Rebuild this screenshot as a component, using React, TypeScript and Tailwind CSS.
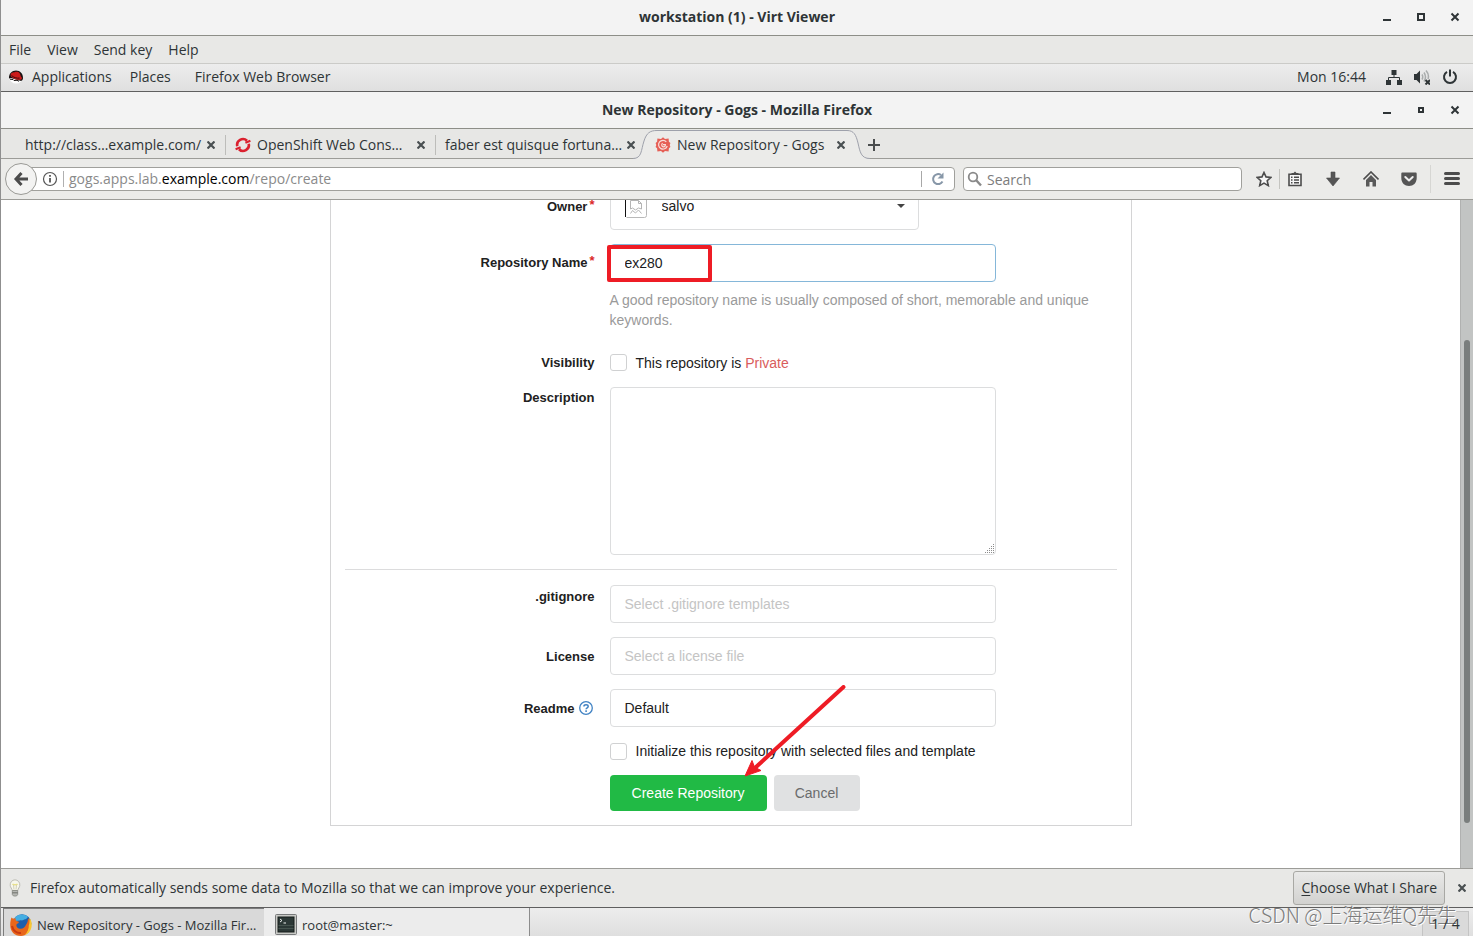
import React from 'react';
import clsx from 'clsx';

interface Tab {
  title: string;
  icon?: React.ReactNode;
  active?: boolean;
}

interface FieldProps {
  label?: React.ReactNode;
  htmlFor?: string;
  required?: boolean;
  labelClass?: string;
  className?: string;
  children: React.ReactNode;
}

const RedHatIcon = () => (
  <svg className="h-4 w-4" viewBox="0 0 16 16">
    <circle cx="8" cy="8" r="6.6" fill="#fdfdfd" />
    <path d="M1 9.5C.6 4.500 4 1.500 8 1.500s7.400 3 7 8c-.3 2-1.600 2.700-2.800 2.300L3 9z" fill="#1a1414" />
    <path d="M3 4.500C4.500 3 5.500 3.500 6.500 3.200 8 2.500 10.500 2.500 11.500 4c.8 1.200 1 2.500 1.400 3.500 1 .8 1.500 2 .6 2.700-1.500 1.200-5.500.6-8-1C3 8 1.800 6.600 3 4.500z" fill="#cc1b1b" />
    <path d="M3.600 6.500c2 2 5 3 8 2.600" fill="none" stroke="#3b0d0d" strokeWidth="1" />
    <path d="M2 10.200l3 .3 1 1 3-.2 2 1" fill="none" stroke="#1a1414" strokeWidth="1" />
  </svg>
);

const OpenShiftIcon = () => (
  <svg className="h-4 w-4 shrink-0" viewBox="0 0 16 16" fill="none" stroke="#db212f" strokeWidth="2.6">
    <path d="M2.300 9.300A5.800 5.800 0 0 1 12 3.800" />
    <path d="M13.700 6.700A5.800 5.800 0 0 1 4 12.200" />
    <path d="M10.400 5.700l5-2M.6 12.300l5-2" strokeWidth="2.200" />
  </svg>
);

const GogsIcon = () => (
  <svg className="h-4 w-4 shrink-0" viewBox="0 0 16 16">
    <path d="M8 .2l2 1.900 3.600-.6.300 3.200 1.500 1.300L14.700 8l.7 2-1.500 1.300-.3 3.200-3.600-.6-2 1.900-2-1.900-3.600.6-.3-3.200L.6 10l.7-2-.7-2 1.500-1.300.3-3.200 3.600.6z" fill="#e65f56" />
    <path d="M11.300 4.800A4.400 4.400 0 1 0 12.200 9" fill="none" stroke="#f9dedb" strokeWidth="1.200" />
    <path d="M7.700 6.200C6.200 7 6.500 9.500 8.200 9.800c1.500.2 2.300-.9 2.200-2.100H8" fill="none" stroke="#f9dedb" strokeWidth="1.200" />
  </svg>
);

const FirefoxIcon = () => (
  <svg className="h-6 w-6 shrink-0" viewBox="0 0 24 24">
    <circle cx="13" cy="10.500" r="9.300" fill="#1d5fae" />
    <path d="M5 6C8 .8 15 .3 19 4c-1 1-2 2.500-4 2.500-1.500 1.500-3 .5-4 1L6 8z" fill="#45aee2" />
    <path d="M2.500 4.500C4 6 5 5.500 7 5.500c-1 1.500 0 2.500 2 3 1.500.3 1 1.500-.8 2.300-1.700.8-.7 4.700 2.800 5 3.500.2 5-2 6-4 1.500-2 2-4 2-6.500 3 3 3.500 6 2.500 9.500C20.500 19.500 17 23 12 23 5.500 23 1.200 18.500 1.200 12c0-3 .5-5.500 1.300-7.500z" fill="#e8661b" />
    <path d="M20.300 4.800c2 2 3 6 2.200 9.500-.8 3.700-3.500 6.700-7 8 3-3 4.500-6.500 4.300-10 .9-1.800.8-5 .5-7.500z" fill="#f9c731" />
    <path d="M3 13c1 5 5 7.500 9 7" fill="none" stroke="#c93a12" strokeWidth="2" />
  </svg>
);

const TerminalIcon = () => (
  <svg className="h-[22px] w-[22px] shrink-0" viewBox="0 0 22 22">
    <rect x=".5" y=".5" width="21" height="20" rx="1" fill="#c9cac6" stroke="#77797a" />
    <rect x="3" y="3" width="16" height="15" fill="#2c3836" stroke="#161c1b" />
    <path d="M3.500 11.500h15M3.500 14.500h15" stroke="#46544f" />
    <path d="M5 5l2 1.500L5 8M8.500 9h2.500" fill="none" stroke="#eef1ee" />
  </svg>
);

const BulbIcon = () => (
  <svg className="h-[18px] w-3" viewBox="0 0 12 18">
    <path d="M6 .8a5 5 0 0 0-4.800 5.500C1.300 8.500 3 9.500 3.200 11.500h5.600C9 9.500 10.700 8.500 10.800 6.300A5 5 0 0 0 6 .8z" fill="#f7f7ec" stroke="#bdbdb4" />
    <path d="M3.500 5c1 1 4 1 5 0" fill="none" stroke="#e8e08a" strokeWidth="1.600" />
    <path d="M4.500 6l.5 4.500M7.500 6L7 10.500" fill="none" stroke="#d3d1b8" />
    <path d="M3.300 11.500h5.400v4L7.500 17h-3l-1.200-1.500z" fill="#b5b7b3" stroke="#84867f" strokeWidth=".8" />
    <path d="M3.300 13.800h5.400" stroke="#6f716c" />
  </svg>
);

const BoldX = () => (
  <svg className="h-2 w-2" viewBox="0 0 8 8" stroke="#4a5052" strokeWidth="2.200">
    <path d="M.5.5l7 7M7.500.5l-7 7" />
  </svg>
);

const WindowButtons = ({ large }: { large?: boolean }) => (
  <div className="absolute right-3 flex items-center gap-[22px]">
    <button aria-label="Minimize" className="flex h-3 w-3 items-center justify-center">
      <svg className="h-3 w-3" viewBox="0 0 12 12">
        <path d="M2 9h8" stroke="#2e3436" strokeWidth="2" />
      </svg>
    </button>
    <button aria-label="Maximize" className="flex h-3 w-3 items-center justify-center">
      <svg className="h-3 w-3" viewBox="0 0 12 12" fill="none" stroke="#2e3436" strokeWidth="2">
        {large ? <rect x="3" y="3" width="6" height="6" /> : <rect x="4" y="4" width="4" height="4" />}
      </svg>
    </button>
    <button aria-label="Close" className="flex h-3 w-3 items-center justify-center">
      <svg className="h-3 w-3" viewBox="0 0 12 12" stroke="#2e3436" strokeWidth="2">
        <path d="M2.500 2.500l7 7M9.500 2.500l-7 7" />
      </svg>
    </button>
  </div>
);

const TitleBar = ({ title, large }: { title: string; large?: boolean }) => (
  <div
    className={clsx(
      'relative flex shrink-0 items-center justify-center border-b border-[#8d8e88] bg-[#f3f3f3]',
      large ? 'h-9 pb-px' : 'h-[37px]'
    )}
  >
    <h1 className="font-bold">{title}</h1>
    <WindowButtons large={large} />
  </div>
);

const tabs: Tab[] = [
  { title: 'http://class…example.com/' },
  { title: 'OpenShift Web Cons…', icon: <OpenShiftIcon /> },
  { title: 'faber est quisque fortuna…' },
  { title: 'New Repository - Gogs', icon: <GogsIcon />, active: true },
];

const TabStrip = () => (
  <div className="flex h-[30px] shrink-0 border-b border-[#9c9c98] bg-[#e7e7e5] pl-[14px]">
    {tabs.map((tab, i) => (
      <div key={tab.title} className="relative flex h-[29px] w-[210px] items-center">
        {tab.active && (
          <svg className="absolute -left-3 top-0 h-[30px] w-[237px]" viewBox="0 0 237 30">
            <path d="M0 30V29.500C9 29.500 8 21 11 12 13.500 4 17 1.500 24 1.500H214C221 1.500 223 6 225 14 227 23 228 29.500 237 29.500V30z" fill="#ebebe9" />
            <path d="M0 29.500C9 29.500 8 21 11 12 13.500 4 17 1.500 24 1.500H214C221 1.500 223 6 225 14 227 23 228 29.500 237 29.500" fill="none" stroke="#9ea1ab" />
          </svg>
        )}
        <div className="relative flex min-w-0 flex-1 items-center gap-[6px] pl-[10px] pt-[3px]">
          {tab.icon}
          <span className="whitespace-nowrap">{tab.title}</span>
        </div>
        <button aria-label="Close tab" className="relative mr-[10px] mt-[3px] flex h-2 w-2">
          <BoldX />
        </button>
        {i < 2 && <span className="absolute -right-px top-[6px] h-5 w-px bg-[#bdbdba]" />}
      </div>
    ))}
    <button aria-label="New tab" className="ml-[13px] mt-[10px] flex h-3 w-3">
      <svg className="h-3 w-3" viewBox="0 0 12 12" stroke="#4a4d4e" strokeWidth="2">
        <path d="M6 0v12M0 6h12" />
      </svg>
    </button>
  </div>
);

const toolbarIcons: { label: string; icon: React.ReactNode }[] = [
  {
    label: 'Bookmarks',
    icon: (
      <>
        <path d="M2 3.300h12v11.200H2z" fill="#f6f6f6" stroke="#4c4c4c" strokeWidth="1.600" />
        <path d="M4.500 4V2h2L8 .5 9.500 2h2v2z" fill="#4c4c4c" />
        <path d="M4 6.200h1.500M7 6.200h5M4 9h1.500M7 9h5M4 11.800h1.500M7 11.800h5" stroke="#4c4c4c" strokeWidth="1.500" />
      </>
    ),
  },
  {
    label: 'Downloads',
    icon: <path d="M6 1h4v6h4.500L8 15 1.500 7H6z" fill="#555" stroke="#4a4a4a" strokeWidth=".6" />,
  },
  {
    label: 'Home',
    icon: (
      <>
        <path d="M.5 8.500L8 1l7.500 7.500" fill="none" stroke="#4c4c4c" strokeWidth="1.600" />
        <path d="M3 9l5-5 5 5v6.500H9.500v-4.500h-3v4.500H3z" fill="#5a5a5a" />
      </>
    ),
  },
  {
    label: 'Pocket',
    icon: (
      <>
        <path d="M1.500 1.500h13c.8 0 1.200.5 1.200 1.200V7c0 5-3.500 8-7.700 8S.3 12 .3 7V2.700c0-.7.400-1.200 1.200-1.200z" fill="#555" />
        <path d="M4.300 6L8 9.500 11.700 6" fill="none" stroke="#eee" strokeWidth="2" strokeLinecap="round" strokeLinejoin="round" />
      </>
    ),
  },
];

const NavBar = () => (
  <div className="flex h-[41px] shrink-0 items-center border-b border-[#9c9c98] bg-[#ebebe9] pl-1 pr-[13px]">
    <button aria-label="Back" className="relative z-10 flex h-8 w-8 shrink-0 items-center justify-center rounded-full border border-[#9a9a96] bg-[#f3f3f2]">
      <svg className="h-4 w-4" viewBox="0 0 16 16" fill="none" stroke="#4c4c4c" strokeWidth="3">
        <path d="M8.500 2L3 8l5.500 6M3.500 8H15" />
      </svg>
    </button>
    <div className="-ml-2 flex h-6 flex-1 items-center rounded-r-sm border border-[#a0a09c] bg-white pl-3">
      <svg className="h-4 w-4 shrink-0" viewBox="0 0 16 16" fill="none" stroke="#555">
        <circle cx="8" cy="8" r="6.500" strokeWidth="1.200" />
        <path d="M8 7v4.500M8 4v1.700" strokeWidth="1.800" />
      </svg>
      <span className="ml-[5px] h-4 w-px bg-[#b0b0b0]" />
      <div
        role="textbox"
        aria-label="Address"
        contentEditable
        suppressContentEditableWarning
        className="ml-[5px] flex-1 whitespace-nowrap text-[#8a8a8a]"
      >
        gogs.apps.lab.<span className="text-black">example.com</span>/repo/create
      </div>
      <span className="h-4 w-px bg-[#a8a8a8]" />
      <button aria-label="Reload" className="flex w-8 justify-center">
        <svg className="h-[14px] w-[14px]" viewBox="0 0 14 14">
          <path d="M11.500 9.500A5 5 0 1 1 10 3" fill="none" stroke="#8797a8" strokeWidth="2" />
          <path d="M12.500.5v6h-6z" fill="#8797a8" />
        </svg>
      </button>
    </div>
    <div className="relative ml-2 w-[279px]">
      <svg className="absolute left-1 top-1 h-4 w-4" viewBox="0 0 16 16" fill="none" stroke="#8a8a8a" strokeWidth="1.800">
        <circle cx="6" cy="6" r="4.300" />
        <path d="M9 9l5 5.500" strokeWidth="2.400" />
      </svg>
      <input
        type="text"
        aria-label="Search"
        placeholder="Search"
        className="block h-6 w-full rounded-sm border border-[#a0a09c] bg-white pl-[23px] outline-none placeholder:text-[#7c7c7c]"
      />
    </div>
    <div className="ml-[14px] flex items-center">
      <button aria-label="Bookmark this page" className="h-4 w-4">
        <svg className="h-4 w-4" viewBox="0 0 16 16" fill="#f6f6f6" stroke="#4c4c4c" strokeWidth="1.600">
          <path d="M8 1.500l2 4.400 4.900.5-3.700 3.300 1.100 4.900L8 12.100l-4.300 2.500 1.100-4.900L1.100 6.400 6 5.900z" />
        </svg>
      </button>
      <span className="mx-[7px] h-5 w-px bg-[#c4c4c0]" />
      <div className="flex gap-[22px]">
        {toolbarIcons.map((item) => (
          <button key={item.label} aria-label={item.label} className="h-4 w-4">
            <svg className="h-4 w-4" viewBox="0 0 16 16">
              {item.icon}
            </svg>
          </button>
        ))}
      </div>
      <span className="mx-[13px] h-7 w-px bg-[#d6d6d3]" />
      <button aria-label="Open menu" className="h-4 w-4">
        <svg className="h-4 w-4" viewBox="0 0 16 16" stroke="#4c4c4c" strokeWidth="3" strokeLinecap="round">
          <path d="M1.500 2.500h13M1.500 7.500h13M1.500 12.500h13" />
        </svg>
      </button>
    </div>
  </div>
);

const Field = ({ label, htmlFor, required, labelClass = 'pt-[10px]', className, children }: FieldProps) => (
  <div className={clsx('grid grid-cols-[250px_minmax(0,1fr)] gap-x-[15px]', className)}>
    <div className={clsx('text-right text-[13px] leading-5 font-bold', labelClass)}>
      {label && <label htmlFor={htmlFor}>{label}</label>}
      {required && <span className="ml-[2px] inline-block -translate-y-[2px] text-[#db2828]">*</span>}
    </div>
    <div className="min-w-0">{children}</div>
  </div>
);

const controlClass =
  'block h-[38px] w-full max-w-[386px] appearance-none rounded border border-[#dcddde] bg-white px-[14px] text-sm outline-none';
const checkboxClass = 'h-[17px] w-[17px] shrink-0 appearance-none rounded-[3px] border border-[#d0d1d2] bg-white';

const RepositoryForm = () => (
  <form
    className="mx-auto -mt-6 flex w-[802px] max-w-full flex-col gap-[14px] border border-[#d4d4d5] px-[14px] pb-[14px] pt-[15px] font-['Liberation_Sans',Arial,sans-serif] text-sm leading-5 text-[#212121]"
    onSubmit={(e) => e.preventDefault()}
  >
    <Field label="Owner" htmlFor="owner" required labelClass="pt-[5px]">
      <div className="relative max-w-[309px]">
        <select id="owner" className="block h-[38px] w-full appearance-none rounded border border-[#dcddde] bg-white pb-[10px] pl-[51px] text-sm outline-none">
          <option>salvo</option>
        </select>
        <svg className="absolute left-[14px] top-0 h-[26px] w-[24px]" viewBox="0 0 24 26" fill="none">
          <path d="M22.500 0v23.500q0 2-2 2H2.500" stroke="#b9b9b9" />
          <path d="M1.500 0v25" stroke="#111" />
          <path d="M6.500 17V8.500h8l3 3V17M14.500 8.500v3h3M6.500 21.500l2-3 3 2.500 3-3 3 3.500M6.500 17l2-1 3 2 3-2 3 1" stroke="#b4b4b4" />
        </svg>
        <svg className="pointer-events-none absolute right-[14px] top-3 h-1 w-2" viewBox="0 0 8 4">
          <path d="M0 0h8L4 4z" fill="#444" />
        </svg>
      </div>
    </Field>

    <Field label="Repository Name" htmlFor="repo_name" required labelClass="pt-[9px]" className="pb-2">
      <div className="relative">
        <input id="repo_name" type="text" defaultValue="ex280" className="block h-[38px] w-full max-w-[386px] rounded border border-[#85b7d9] bg-white px-[14px] text-sm text-[#1b1c1d] outline-none" />
        <span className="pointer-events-none absolute -left-[3px] top-px h-[37px] w-[105px] rounded-[2px] border-4 border-[#ee1c25]" />
      </div>
      <p className="mt-2 text-[#9a9a9a]">
        A good repository name is usually composed of short, memorable and unique keywords.
      </p>
    </Field>

    <Field label="Visibility" htmlFor="private" labelClass="pt-px">
      <div className="flex h-[21px] items-center gap-[9px]">
        <input id="private" type="checkbox" className={checkboxClass} />
        <label htmlFor="private">
          This repository is <strong className="font-normal text-[#d95c5c]">Private</strong>
        </label>
      </div>
    </Field>

    <Field label="Description" htmlFor="description" labelClass="pt-px">
      <div className="relative max-w-[386px]">
        <textarea id="description" className="block h-[168px] w-full resize-none rounded border border-[#dcddde] bg-white px-[14px] py-3 outline-none" />
        <svg className="pointer-events-none absolute bottom-px right-px h-[10px] w-[10px]" viewBox="0 0 10 10" fill="#8c8c8c">
          <path d="M8 0h1v1H8zM6 2h1v1H6zM8 2h1v1H8zM4 4h1v1H4zM6 4h1v1H6zM8 4h1v1H8zM2 6h1v1H2zM4 6h1v1H4zM6 6h1v1H6zM8 6h1v1H8zM0 8h1v1H0zM2 8h1v1H2zM4 8h1v1H4zM6 8h1v1H6zM8 8h1v1H8z" />
        </svg>
      </div>
    </Field>

    <hr className="h-[2px] border-t border-[#dcdcdd]" />

    <Field label=".gitignore" htmlFor="gitignores" labelClass="pt-[2px]">
      <select id="gitignores" className={clsx(controlClass, 'text-[#c4c4c4]')}>
        <option>Select .gitignore templates</option>
      </select>
    </Field>

    <Field label="License" htmlFor="license">
      <select id="license" className={clsx(controlClass, 'text-[#c4c4c4]')}>
        <option>Select a license file</option>
      </select>
    </Field>

    <Field
      htmlFor="readme"
      label={
        <span className="inline-flex items-center gap-1 pr-[2px]">
          Readme
          <svg className="mb-[3px] h-[14px] w-[14px]" viewBox="0 0 14 14" fill="none" stroke="#4183c4">
            <circle cx="7" cy="7" r="6.300" strokeWidth="1.300" />
            <path d="M4.900 5.500c.1-2.300 4.300-2.300 4.300 0 0 1.300-2.100 1.300-2.100 2.700M7.100 9.300v1.600" strokeWidth="1.500" />
          </svg>
        </span>
      }
    >
      <select id="readme" className={clsx(controlClass, 'text-[#212121]')}>
        <option>Default</option>
      </select>
    </Field>

    <Field>
      <div className="relative flex h-5 items-center gap-[9px]">
        <input id="auto_init" type="checkbox" className={checkboxClass} />
        <label htmlFor="auto_init">Initialize this repository with selected files and template</label>
        <svg className="pointer-events-none absolute -top-14 left-[135px] z-10 h-[93px] w-[101px]" viewBox="0 0 101 93">
          <path d="M98.500 2L11 82" stroke="#ee1c25" strokeWidth="4" strokeLinecap="round" />
          <path d="M0 91L7 75.500l2.500 6.500 6.500 3.500z" fill="#ee1c25" stroke="#ee1c25" />
        </svg>
      </div>
    </Field>

    <Field>
      <div className="flex gap-[7px]">
        <button type="submit" className="h-9 min-w-[157px] rounded bg-[#21ba45] px-5 text-white">
          Create Repository
        </button>
        <a href="#" className="flex h-9 min-w-[86px] items-center justify-center rounded bg-[#e0e1e2] px-5 text-[#6a6b6c]">
          Cancel
        </a>
      </div>
    </Field>
  </form>
);

export default function App() {
  return (
    <div className="relative flex h-screen flex-col overflow-hidden border-l border-[#8f8f8f] bg-white font-['Open_Sans','Noto_Sans',sans-serif] text-sm leading-5 text-[#2e3436]">
      <TitleBar title="workstation (1) - Virt Viewer" large />

      <nav className="flex h-7 shrink-0 items-center gap-4 border-b border-[#cbcbc8] bg-[#e8e8e6] pl-2">
        <button>File</button>
        <button>View</button>
        <button>Send key</button>
        <button>Help</button>
      </nav>

      <header className="flex h-7 shrink-0 items-center border-b border-[#5f5f5f] bg-linear-to-b from-[#ededed] to-[#dfdfdf] pb-px pl-[7px] pr-[15px]">
        <RedHatIcon />
        <button className="ml-2">Applications</button>
        <button className="ml-[18px]">Places</button>
        <button className="ml-6">Firefox Web Browser</button>
        <span className="ml-auto mr-5">Mon 16:44</span>
        <div className="flex items-center gap-3">
          <svg className="h-4 w-4" viewBox="0 0 16 16">
            <path d="M5.500 1h5v5h-5zM0 11h5v5H0zM11 11h5v5h-5z" fill="#2e3436" />
            <path d="M8 6v2.500M2.500 11V8.500h11V11" fill="none" stroke="#2e3436" />
          </svg>
          <svg className="h-4 w-4" viewBox="0 0 16 16" fill="none">
            <path d="M0 5h2.500L6 1.500v13L2.500 11H0z" fill="#2e3436" />
            <path d="M8 5.500q1.500 2.500 0 5M10 3.500q3 4.500 0 9M12 1.500q3.500 4 2 8.500" stroke="#a9acac" strokeWidth="1.500" />
            <path d="M11.500 11l4.500 4.500M16 11l-4.500 4.500" stroke="#2e3436" strokeWidth="2" />
          </svg>
          <svg className="h-4 w-4" viewBox="0 0 16 16" fill="none" stroke="#2e3436" strokeWidth="2">
            <path d="M5 2.800a6 6 0 1 0 6 0M8 .5v7" />
          </svg>
        </div>
      </header>

      <TitleBar title="New Repository - Gogs - Mozilla Firefox" />
      <TabStrip />
      <NavBar />

      <main className="flex min-h-0 flex-1">
        <div className="min-w-0 flex-1 overflow-hidden">
          <RepositoryForm />
        </div>
        <div className="flex w-[13px] shrink-0 flex-col items-center border-l border-[#b0b1b0] bg-[#c2c4c3]">
          <div className="flex-[140]" />
          <div className="w-[6px] flex-[483] rounded-full bg-[#7a7e7d]" />
          <div className="flex-[45]" />
        </div>
      </main>

      <div className="flex h-[39px] shrink-0 items-center border-t border-[#9c9c98] bg-[#e8e8e6] pl-2 pr-[7px]">
        <BulbIcon />
        <p className="ml-[9px]">Firefox automatically sends some data to Mozilla so that we can improve your experience.</p>
        <button className="ml-auto h-[34px] rounded-[3px] border border-[#a8a8a4] bg-linear-to-b from-[#e9e9e8] to-[#d2d2d0] px-[7px]">
          <span className="underline underline-offset-2">C</span>hoose What I Share
        </button>
        <button aria-label="Close notification" className="ml-[13px] flex h-2 w-2">
          <BoldX />
        </button>
      </div>

      <footer className="flex h-[29px] shrink-0 items-stretch border-t border-[#5f5f5f] bg-linear-to-b from-[#ededed] to-[#dfdfdf] pl-[2px] pr-1">
        <button className="flex w-[261px] items-center gap-1 whitespace-nowrap border-l border-t border-[#7c7c7c] bg-[#d9d9d9] pl-[5px] pt-[5px] text-[13px]">
          <FirefoxIcon />
          <span>New Repository - Gogs - Mozilla Fir…</span>
        </button>
        <button className="flex w-[266px] items-center gap-[5px] border-r border-[#8c8c8c] bg-[#ececec] pl-[11px] pt-[5px] text-[13px]">
          <TerminalIcon />
          <span>root@master:~</span>
        </button>
        <div className="ml-auto mt-[3px] flex w-[47px] items-center justify-center border border-b-0 border-[#c4c4c4] bg-[#dadada]">
          <span className="relative z-10">1 / 4</span>
        </div>
      </footer>

      <span className="pointer-events-none absolute bottom-[9px] right-4 font-['Noto_Sans_CJK_SC',sans-serif] text-xl leading-6 font-light text-[#7c7c7c] [text-shadow:1px_1px_0_#fff]">
        CSDN @上海运维Q先生
      </span>
    </div>
  );
}
